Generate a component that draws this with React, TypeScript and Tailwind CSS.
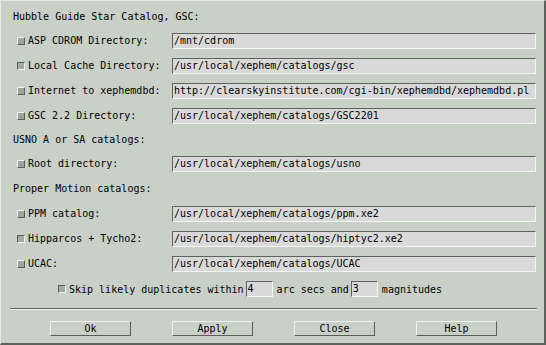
import React from "react";

// XEphem-style catalog paths dialog (Motif look).

const FONT = "font-['DejaVu_Sans_Mono','Liberation_Mono',monospace] text-[10px] text-black";

function Check({ on }: { on: boolean }) {
  return (
    <span
      className={`inline-block w-[8px] h-[8px] shrink-0 border ${
        on
          ? "bg-[#a3aaa3] border-t-[#5a5e5a] border-l-[#5a5e5a] border-b-[#f2f4f2] border-r-[#f2f4f2]"
          : "bg-[#9ea59e] border-t-[#f2f4f2] border-l-[#f2f4f2] border-b-[#5a5e5a] border-r-[#5a5e5a]"
      }`}
    />
  );
}

function Field({ value, className = "" }: { value: string; className?: string }) {
  return (
    <div
      className={`h-[16px] shrink-0 bg-[#d9d9d9] border border-t-[#5f635f] border-l-[#5f635f] border-b-[#f4f6f4] border-r-[#f4f6f4] pl-[1px] flex items-center leading-none whitespace-nowrap overflow-hidden ${className}`}
    >
      {value}
    </div>
  );
}

function Row({ label, value, on = false }: { label: string; value: string; on?: boolean }) {
  return (
    <div className="h-[25px] flex items-center">
      <div className="w-[171px] shrink-0 pl-[16px] flex items-center gap-[3px]">
        <Check on={on} />
        <span className="whitespace-nowrap">{label}</span>
      </div>
      <Field value={value} className="w-[364px]" />
    </div>
  );
}

function Section({ children, h = "h-[25px]" }: { children: React.ReactNode; h?: string }) {
  return <div className={`${h} flex items-center pl-[12px] whitespace-nowrap`}>{children}</div>;
}

function Btn({ children }: { children: React.ReactNode }) {
  return (
    <div className="w-[81px] h-[15px] flex items-center justify-center border border-t-[#eef1ee] border-l-[#eef1ee] border-b-[#5a5e5a] border-r-[#5a5e5a] bg-[#c8d0c8]">
      {children}
    </div>
  );
}

export default function App() {
  return (
    <div className={`w-[546px] h-[345px] bg-[#c8d0c8] border-t border-l border-t-[#e6ebe6] border-l-[#e6ebe6] border-r-2 border-b-2 border-r-[#5e625e] border-b-[#5e625e] flex flex-col pt-[3px] ${FONT}`}>
      <Section h="h-[24px]">Hubble Guide Star Catalog, GSC:</Section>
      <Row label="ASP CDROM Directory:" value="/mnt/cdrom" />
      <Row label="Local Cache Directory:" value="/usr/local/xephem/catalogs/gsc" on />
      <Row label="Internet to xephemdbd:" value="http://clearskyinstitute.com/cgi-bin/xephemdbd/xephemdbd.pl" />
      <Row label="GSC 2.2 Directory:" value="/usr/local/xephem/catalogs/GSC2201" />
      <Section h="h-[23px]">USNO A or SA catalogs:</Section>
      <Row label="Root directory:" value="/usr/local/xephem/catalogs/usno" />
      <Section>Proper Motion catalogs:</Section>
      <Row label="PPM catalog:" value="/usr/local/xephem/catalogs/ppm.xe2" />
      <Row label="Hipparcos + Tycho2:" value="/usr/local/xephem/catalogs/hiptyc2.xe2" on />
      <Row label="UCAC:" value="/usr/local/xephem/catalogs/UCAC" />
      <div className="h-[26px] flex items-center pl-[57px] whitespace-nowrap">
        <Check on />
        <span className="ml-[3px]">Skip likely duplicates within</span>
        <Field value="4" className="w-[27px] ml-[2px]" />
        <span className="ml-[4px]">arc secs and</span>
        <Field value="3" className="w-[27px] ml-[2px]" />
        <span className="ml-[4px]">magnitudes</span>
      </div>
      <div className="mt-[6px] ml-[9px] w-[527px] border-t border-b border-t-[#5e625e] border-b-[#f2f4f2]" />
      <div className="mt-[11px] pl-[49px] flex gap-[41px]">
        <Btn>Ok</Btn>
        <Btn>Apply</Btn>
        <Btn>Close</Btn>
        <Btn>Help</Btn>
      </div>
    </div>
  );
}
